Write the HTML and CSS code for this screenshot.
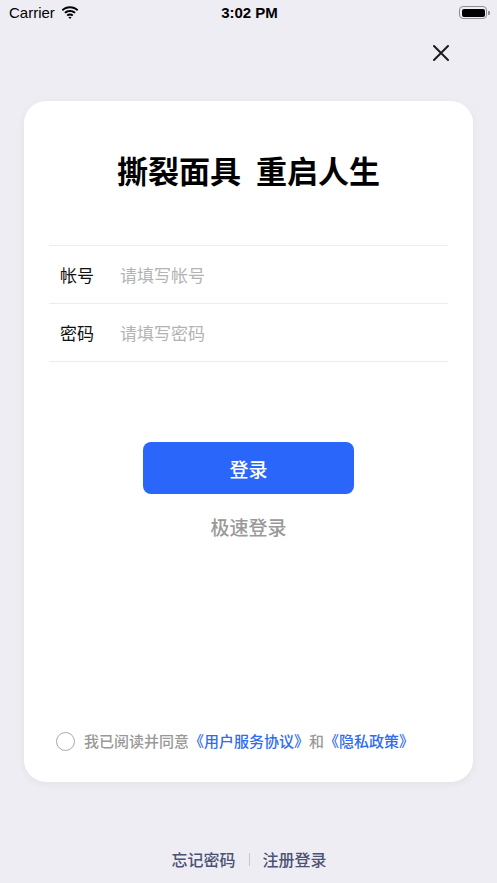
FILE: index.html
```html
<!DOCTYPE html>
<html lang="zh-CN">
<head>
  <meta charset="utf-8">
  <meta name="viewport" content="width=device-width, initial-scale=1">
  <title>登录</title>
  <link rel="stylesheet" href="styles.css">
</head>
<body>
  <div class="screen">
    <!-- 状态栏 -->
    <div class="statusBar">
      <div class="statusLeft">
        <span>Carrier</span>
        <svg class="wifi" width="18" height="13" viewBox="0 0 18 13">
          <path d="M9 2.2c2.7 0 5.2 1 7 2.8l1.3-1.4C15.1 1.5 12.2.3 9 .3S2.9 1.5.7 3.6L2 5C3.8 3.2 6.3 2.2 9 2.2z" fill="#000"/>
          <path d="M9 5.9c1.7 0 3.2.6 4.4 1.7l1.3-1.4C13.2 4.8 11.2 4 9 4S4.8 4.8 3.3 6.2l1.3 1.4C5.8 6.5 7.3 5.9 9 5.9z" fill="#000"/>
          <path d="M9 9.5c.8 0 1.5.3 2 .8L12.4 9c-.9-.9-2.1-1.4-3.4-1.4S6.5 8.1 5.6 9L7 10.3c.5-.5 1.2-.8 2-.8zM9 13l1.6-1.7c-.4-.4-1-.6-1.6-.6s-1.2.2-1.6.6z" fill="#000"/>
        </svg>
      </div>
      <div class="statusTime">3:02 PM</div>
      <div class="statusRight">
        <div class="battery"><div class="batteryLevel"></div></div>
        <div class="batteryCap"></div>
      </div>
    </div>

    <!-- 关闭按钮 -->
    <div class="topBar">
      <button class="closeButton" title="关闭">
        <svg width="16" height="16" viewBox="0 0 16 16">
          <path d="M1 1l14 14M15 1L1 15" stroke="#1c1c1e" stroke-width="2" stroke-linecap="round" fill="none"/>
        </svg>
      </button>
    </div>

    <!-- 登录卡片 -->
    <div class="card">
      <h1 class="title">撕裂面具 重启人生</h1>

      <div class="form">
        <div class="formRow">
          <label class="formLabel" for="account">帐号</label>
          <input id="account" class="formInput" type="text" placeholder="请填写帐号">
        </div>
        <div class="formRow">
          <label class="formLabel" for="password">密码</label>
          <input id="password" class="formInput" type="password" placeholder="请填写密码">
        </div>
      </div>

      <button class="loginButton">登录</button>
      <div class="quickLogin">极速登录</div>

      <div class="agreement">
        <span class="checkCircle"></span>
        <span class="agreementText">我已阅读并同意<a class="agreementLink">《用户服务协议》</a>和<a class="agreementLink">《隐私政策》</a></span>
      </div>
    </div>

    <!-- 底部链接 -->
    <div class="footerLinks">
      <a class="footerLink">忘记密码</a>
      <span class="footerDivider"></span>
      <a class="footerLink">注册登录</a>
    </div>
  </div>
</body>
</html>
```

FILE: styles.css
```css
:root {
  --page-bg: #efedf4;
  --theme-primary: #2b66fb;
  --link-color: #2e6cf2;
  --line-color: #ececec;
  --text-gray: #999999;
}

* {
  padding: 0;
  margin: 0;
  box-sizing: border-box;
}

html,
body {
  width: 100%;
  height: 100%;
  background: var(--page-bg);
  font-family: "Noto Sans CJK SC", "Noto Sans", sans-serif;
}

.screen {
  display: flex;
  flex-direction: column;
  height: 883px;
}

.statusBar {
  display: flex;
  align-items: center;
  justify-content: space-between;
  height: 25px;
  padding: 0 7px 0 9px;
  font-family: "Liberation Sans", Arial, sans-serif;
  font-size: 15px;
  color: #000;
}

.statusLeft {
  display: flex;
  align-items: center;
  gap: 6px;
  width: 120px;
}

.statusTime {
  font-weight: 700;
}

.statusRight {
  display: flex;
  align-items: center;
  justify-content: flex-end;
  width: 120px;
}

.battery {
  width: 28px;
  height: 13px;
  border: 1px solid #8e8e93;
  border-radius: 4px;
  padding: 1.5px;
}

.batteryLevel {
  width: 100%;
  height: 100%;
  background: #000;
  border-radius: 2px;
}

.batteryCap {
  width: 1.5px;
  height: 4px;
  margin-left: 1px;
  background: #8e8e93;
  border-radius: 0 1px 1px 0;
}

.topBar {
  display: flex;
  justify-content: flex-end;
  height: 76px;
  padding: 20px 48px 0 0;
}

.closeButton {
  width: 16px;
  height: 16px;
  background: transparent;
  border: none;
  cursor: pointer;
}

.card {
  display: flex;
  flex-direction: column;
  align-items: center;
  height: 681px;
  margin: 0 24px;
  padding: 48px 25px 31px;
  background: #fff;
  border-radius: 22px;
  box-shadow: 0 2px 8px rgba(0, 0, 0, 0.05);
}

.title {
  font-size: 31px;
  line-height: 42px;
  font-weight: 700;
  color: #000;
  word-spacing: 8px;
}

.form {
  width: 100%;
  margin-top: 54px;
  border-top: 1px solid var(--line-color);
}

.formRow {
  display: flex;
  align-items: center;
  height: 58px;
  padding-left: 11px;
  border-bottom: 1px solid var(--line-color);
}

.formLabel {
  width: 60px;
  font-size: 17px;
  color: #111;
}

.formInput {
  flex: 1;
  border: none;
  outline: none;
  background: transparent;
  font-family: inherit;
  font-size: 17px;
  color: #111;
}

.formInput::placeholder {
  color: #b3b3b3;
}

.loginButton {
  width: 211px;
  height: 52px;
  margin-top: 80px;
  background: var(--theme-primary);
  color: #fff;
  border: none;
  border-radius: 8px;
  font-family: inherit;
  font-size: 19px;
  font-weight: 500;
  cursor: pointer;
}

.quickLogin {
  margin-top: 20px;
  font-size: 19px;
  line-height: 26px;
  font-weight: 500;
  color: var(--text-gray);
}

.agreement {
  display: flex;
  align-items: center;
  align-self: flex-start;
  gap: 9px;
  margin-top: auto;
  padding-left: 7px;
}

.checkCircle {
  width: 19px;
  height: 19px;
  border: 1.5px solid #aaaaaa;
  border-radius: 50%;
}

.agreementText {
  font-size: 15px;
  line-height: 20px;
  font-weight: 500;
  color: var(--text-gray);
}

.agreementLink {
  color: var(--link-color);
}

.footerLinks {
  display: flex;
  align-items: center;
  justify-content: center;
  gap: 13px;
  margin-top: 66px;
  padding-left: 1px;
}

.footerLink {
  font-size: 16px;
  line-height: 22px;
  font-weight: 500;
  color: #4b5274;
}

.footerDivider {
  width: 1px;
  height: 13px;
  background: #c8c8cc;
}
```
